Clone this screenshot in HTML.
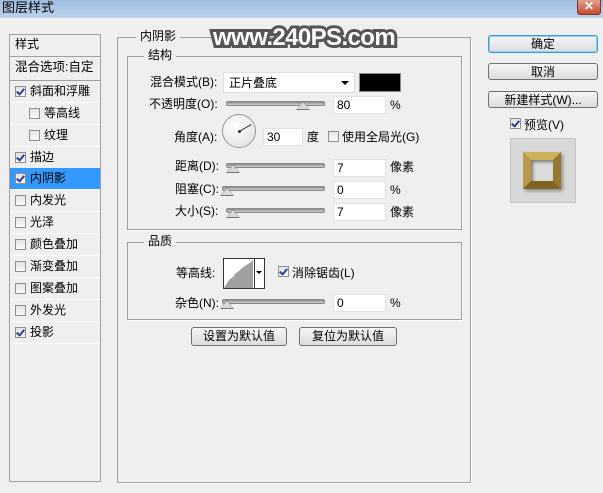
<!DOCTYPE html>
<html><head><meta charset="utf-8"><style>
*{margin:0;padding:0;box-sizing:border-box}
body{width:603px;height:493px;background:#efefef;position:relative;overflow:hidden;font-family:"Liberation Sans","Noto Sans CJK SC","WenQuanYi Zen Hei",sans-serif;font-size:12px;color:#000}
.a{position:absolute;white-space:nowrap}
.t{line-height:14px}
.cb{position:absolute;width:11px;height:11px;border:1px solid #8f8f8f;background:linear-gradient(#e4e4e4,#fafafa)}
.cb.on::after{content:"";position:absolute;left:2px;top:0px;width:3px;height:6px;border:solid #2a3f9a;border-width:0 2px 2px 0;transform:rotate(40deg)}
.row{position:absolute;left:10px;width:90px;height:22px;border-bottom:1px solid #fff}
.box{position:absolute;border:1px solid #a0a0a0;box-shadow:1px 1px 0 #fff}
.lbl{position:absolute;background:#efefef;padding:0 4px;line-height:14px}
.inp{position:absolute;background:#fff;border:1px solid #e2e2e2;height:18px;padding-left:3px;line-height:17px}
.sl{position:absolute;height:5px;border-radius:2px;background:linear-gradient(#8a8a8a,#d0d0d0);border:1px solid #888}
.th{position:absolute;width:0;height:0;border-left:7px solid transparent;border-right:7px solid transparent;border-bottom:9px solid #777}
.th::after{content:"";position:absolute;left:-6px;top:1px;border-left:6px solid transparent;border-right:6px solid transparent;border-bottom:7px solid #d8d8d8}
.btn{position:absolute;border:1px solid #707070;border-radius:3px;background:linear-gradient(#f6f6f6,#dcdcdc);text-align:center;line-height:16px}
</style></head><body>
<div class="a" style="left:0;top:0;width:603px;height:18px;background:linear-gradient(#9dbde0,#bcd3ea)"></div>
<div class="a t" style="left:2px;top:1px;font-size:13px">图层样式</div>
<div class="a" style="left:577px;top:0;width:24px;height:15px;background:linear-gradient(#e2a08e,#c54a30);border:1px solid #8a3020;border-top:0;border-radius:0 0 3px 3px;color:#fff;font-weight:bold;text-align:center;line-height:13px;font-size:12px">✕</div>

<div class="a" style="left:9px;top:34px;width:92px;height:448px;border:1px solid #a0a0a0;background:#efefef"></div>
<div class="row" style="top:35px;height:22px;border-bottom:1px solid #a0a0a0"><span class="a t" style="left:5px;top:2px">样式</span></div>
<div class="row" style="top:57px;height:24px;border-bottom:1px solid #a0a0a0"><span class="a t" style="left:5px;top:3px;font-size:12.5px">混合选项:自定</span></div>
<div class="row" style="top:81px"><div class="cb on" style="left:5px;top:5px"></div><span class="a t" style="left:20px;top:3px">斜面和浮雕</span></div>
<div class="row" style="top:103px"><div class="cb" style="left:19px;top:5px"></div><span class="a t" style="left:34px;top:3px">等高线</span></div>
<div class="row" style="top:125px"><div class="cb" style="left:19px;top:5px"></div><span class="a t" style="left:34px;top:3px">纹理</span></div>
<div class="row" style="top:147px"><div class="cb on" style="left:5px;top:5px"></div><span class="a t" style="left:20px;top:3px">描边</span></div>
<div class="row" style="top:168px;background:#3399ff"><div class="cb on" style="left:5px;top:5px"></div><span class="a t" style="left:20px;top:3px">内阴影</span></div>
<div class="row" style="top:190px"><div class="cb" style="left:5px;top:5px"></div><span class="a t" style="left:20px;top:3px">内发光</span></div>
<div class="row" style="top:212px"><div class="cb" style="left:5px;top:5px"></div><span class="a t" style="left:20px;top:3px">光泽</span></div>
<div class="row" style="top:234px"><div class="cb" style="left:5px;top:5px"></div><span class="a t" style="left:20px;top:3px">颜色叠加</span></div>
<div class="row" style="top:256px"><div class="cb" style="left:5px;top:5px"></div><span class="a t" style="left:20px;top:3px">渐变叠加</span></div>
<div class="row" style="top:278px"><div class="cb" style="left:5px;top:5px"></div><span class="a t" style="left:20px;top:3px">图案叠加</span></div>
<div class="row" style="top:300px"><div class="cb" style="left:5px;top:5px"></div><span class="a t" style="left:20px;top:3px">外发光</span></div>
<div class="row" style="top:322px"><div class="cb on" style="left:5px;top:5px"></div><span class="a t" style="left:20px;top:3px">投影</span></div>

<div class="box" style="left:117px;top:37px;width:354px;height:446px"></div>
<div class="lbl" style="left:136px;top:29px">内阴影</div>
<div class="box" style="left:127px;top:56px;width:335px;height:174px"></div>
<div class="lbl" style="left:144px;top:48px">结构</div>

<div class="a t" style="left:150px;top:75px">混合模式(B):</div>
<div class="a" style="left:223px;top:72px;width:132px;height:21px;background:#fff;border:1px solid #e0e0e0"><span class="a t" style="left:5px;top:3px">正片叠底</span><span class="a" style="right:5px;top:8px;border-left:4px solid transparent;border-right:4px solid transparent;border-top:4px solid #000"></span></div>
<div class="a" style="left:359px;top:73px;width:42px;height:19px;background:#000;border:1px solid #888"></div>

<div class="a t" style="left:149px;top:97px">不透明度(O):</div>
<div class="sl" style="left:226px;top:101px;width:99px"></div><div class="th" style="left:296px;top:101px"></div>
<div class="inp" style="left:333px;top:96px;width:53px">80</div><div class="a t" style="left:390px;top:98px">%</div>

<div class="a t" style="left:174px;top:130px">角度(A):</div>
<div class="a" style="left:222px;top:114px;width:34px;height:34px;border-radius:50%;border:1px solid #999;background:radial-gradient(circle at 40% 35%,#fff,#ddd)"></div>
<div class="a" style="left:239px;top:131px;width:14px;height:1px;background:#333;transform-origin:0 0;transform:rotate(-30deg)"></div>
<div class="a" style="left:238px;top:130px;width:3px;height:3px;border-radius:50%;background:#333"></div>
<div class="inp" style="left:263px;top:128px;width:40px">30</div>
<div class="a t" style="left:307px;top:130px">度</div>
<div class="cb" style="left:328px;top:131px"></div>
<div class="a t" style="left:342px;top:130px">使用全局光(G)</div>

<div class="a t" style="left:175px;top:159px">距离(D):</div>
<div class="sl" style="left:226px;top:163px;width:99px"></div><div class="th" style="left:226px;top:164px"></div>
<div class="inp" style="left:333px;top:159px;width:53px">7</div><div class="a t" style="left:390px;top:160px">像素</div>
<div class="a t" style="left:175px;top:182px">阻塞(C):</div>
<div class="sl" style="left:222px;top:186px;width:103px"></div><div class="th" style="left:220px;top:187px"></div>
<div class="inp" style="left:333px;top:181px;width:53px">0</div><div class="a t" style="left:390px;top:183px">%</div>
<div class="a t" style="left:175px;top:204px">大小(S):</div>
<div class="sl" style="left:226px;top:208px;width:99px"></div><div class="th" style="left:226px;top:209px"></div>
<div class="inp" style="left:333px;top:203px;width:53px">7</div><div class="a t" style="left:390px;top:205px">像素</div>

<div class="box" style="left:127px;top:242px;width:335px;height:78px"></div>
<div class="lbl" style="left:144px;top:234px">品质</div>
<div class="a t" style="left:176px;top:266px">等高线:</div>
<div class="a" style="left:223px;top:258px;width:42px;height:31px;border:1px solid #333;background:#fff;overflow:hidden">
<svg width="32" height="29" style="position:absolute;left:0;top:0"><path d="M0 29 L3 24 L6 20 L9 18 L12 14 L15 12 L18 9 L21 7 L24 5 L27 3 L29 1 L29 29 Z" fill="#a0a0a0"/></svg>
<div class="a" style="left:30px;top:0;width:1px;height:29px;background:#333"></div>
<span class="a" style="left:32px;top:12px;border-left:3px solid transparent;border-right:3px solid transparent;border-top:3px solid #000"></span></div>
<div class="cb on" style="left:278px;top:266px"></div>
<div class="a t" style="left:292px;top:266px">消除锯齿(L)</div>
<div class="a t" style="left:175px;top:296px">杂色(N):</div>
<div class="sl" style="left:222px;top:299px;width:103px"></div><div class="th" style="left:220px;top:300px"></div>
<div class="inp" style="left:333px;top:294px;width:53px">0</div><div class="a t" style="left:390px;top:296px">%</div>

<div class="btn" style="left:191px;top:327px;width:96px;height:19px">设置为默认值</div>
<div class="btn" style="left:299px;top:327px;width:98px;height:19px">复位为默认值</div>

<div class="btn" style="left:488px;top:35px;width:110px;height:18px;border-color:#3c9ad6;box-shadow:inset 0 0 0 1px #8fd0f5">确定</div>
<div class="btn" style="left:488px;top:63px;width:110px;height:17px">取消</div>
<div class="btn" style="left:488px;top:91px;width:110px;height:17px">新建样式(W)...</div>
<div class="cb on" style="left:510px;top:118px"></div>
<div class="a t" style="left:524px;top:118px">预览(V)</div>
<div class="a" style="left:510px;top:138px;width:66px;height:65px;background:#d8d8d8;border:1px solid #c4c4c4"></div>
<div class="a" style="left:523px;top:152px;width:38px;height:37px;border:8px solid #a88a38;border-top-color:#cdb25c;border-left-color:#b89a48;border-bottom-color:#7f6422;border-right-color:#957830;background:#dcdcdc;box-shadow:2px 2px 3px rgba(0,0,0,.35),inset 2px 2px 3px rgba(0,0,0,.45)"></div>

<div class="a" style="left:213px;top:23px;font-family:'Liberation Sans',sans-serif;font-weight:bold;font-size:24px;color:#fff;letter-spacing:-0.6px;-webkit-text-stroke:6px #555;paint-order:stroke fill;line-height:30px">www.240PS.com</div>
</body></html>
